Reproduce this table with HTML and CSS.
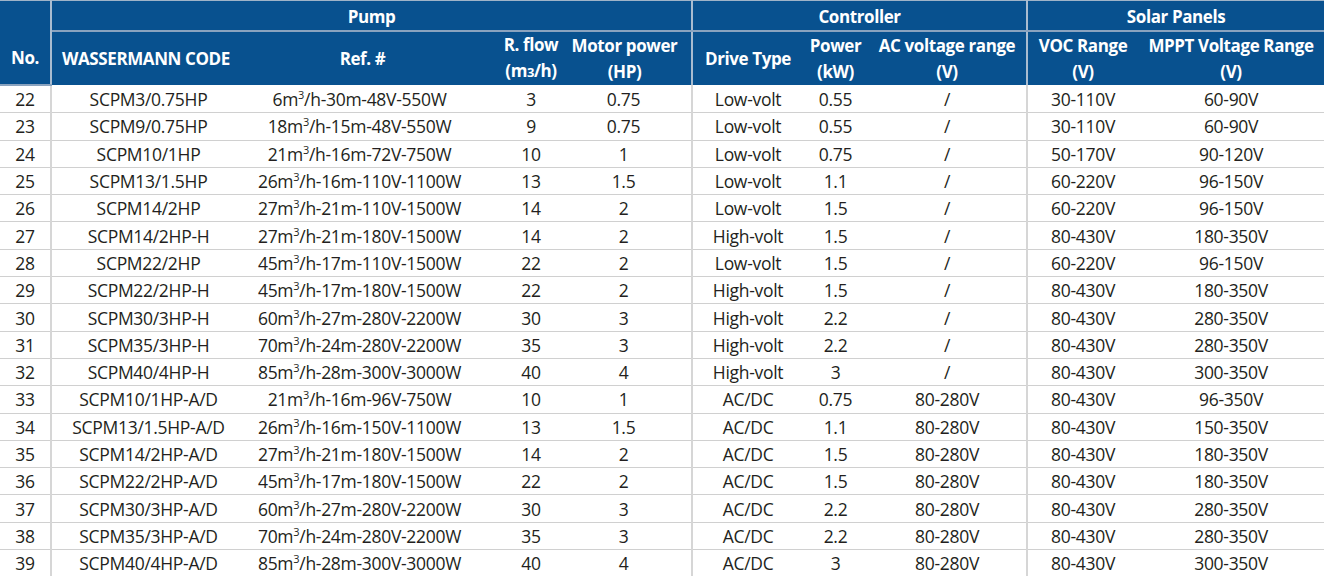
FILE: index.html
```html
<!DOCTYPE html>
<html>
<head>
  <title>Solar Pump Specifications</title>
  <link rel="stylesheet" href="styles.css">
</head>
<body>
  <table class="spec-table">
    <colgroup>
      <col class="c-no">
      <col class="c-code">
      <col class="c-ref">
      <col class="c-flow">
      <col class="c-motor">
      <col class="c-drive">
      <col class="c-power">
      <col class="c-ac">
      <col class="c-voc">
      <col class="c-mppt">
    </colgroup>
    <thead>
      <tr class="group-row">
        <th rowspan="2" class="no-head">No.</th>
        <th colspan="4">Pump</th>
        <th colspan="3" class="group-start">Controller</th>
        <th colspan="2" class="group-start">Solar Panels</th>
      </tr>
      <tr class="sub-row">
        <th class="code-head">WASSERMANN CODE</th>
        <th class="ref-head">Ref. #</th>
        <th>R. flow<br>(m<span class="small3">3</span>/h)</th>
        <th class="motor-head">Motor power<br>(HP)</th>
        <th class="group-start">Drive Type</th>
        <th>Power<br>(kW)</th>
        <th>AC voltage range<br>(V)</th>
        <th class="group-start">VOC Range<br>(V)</th>
        <th>MPPT Voltage Range<br>(V)</th>
      </tr>
    </thead>
    <tbody id="rows"></tbody>
  </table>

  <script>
    const data = [
      [22, 'SCPM3/0.75HP', 6, '30m-48V-550W', 3, '0.75', 'Low-volt', '0.55', '/', '30-110V', '60-90V'],
      [23, 'SCPM9/0.75HP', 18, '15m-48V-550W', 9, '0.75', 'Low-volt', '0.55', '/', '30-110V', '60-90V'],
      [24, 'SCPM10/1HP', 21, '16m-72V-750W', 10, '1', 'Low-volt', '0.75', '/', '50-170V', '90-120V'],
      [25, 'SCPM13/1.5HP', 26, '16m-110V-1100W', 13, '1.5', 'Low-volt', '1.1', '/', '60-220V', '96-150V'],
      [26, 'SCPM14/2HP', 27, '21m-110V-1500W', 14, '2', 'Low-volt', '1.5', '/', '60-220V', '96-150V'],
      [27, 'SCPM14/2HP-H', 27, '21m-180V-1500W', 14, '2', 'High-volt', '1.5', '/', '80-430V', '180-350V'],
      [28, 'SCPM22/2HP', 45, '17m-110V-1500W', 22, '2', 'Low-volt', '1.5', '/', '60-220V', '96-150V'],
      [29, 'SCPM22/2HP-H', 45, '17m-180V-1500W', 22, '2', 'High-volt', '1.5', '/', '80-430V', '180-350V'],
      [30, 'SCPM30/3HP-H', 60, '27m-280V-2200W', 30, '3', 'High-volt', '2.2', '/', '80-430V', '280-350V'],
      [31, 'SCPM35/3HP-H', 70, '24m-280V-2200W', 35, '3', 'High-volt', '2.2', '/', '80-430V', '280-350V'],
      [32, 'SCPM40/4HP-H', 85, '28m-300V-3000W', 40, '4', 'High-volt', '3', '/', '80-430V', '300-350V'],
      [33, 'SCPM10/1HP-A/D', 21, '16m-96V-750W', 10, '1', 'AC/DC', '0.75', '80-280V', '80-430V', '96-350V'],
      [34, 'SCPM13/1.5HP-A/D', 26, '16m-150V-1100W', 13, '1.5', 'AC/DC', '1.1', '80-280V', '80-430V', '150-350V'],
      [35, 'SCPM14/2HP-A/D', 27, '21m-180V-1500W', 14, '2', 'AC/DC', '1.5', '80-280V', '80-430V', '180-350V'],
      [36, 'SCPM22/2HP-A/D', 45, '17m-180V-1500W', 22, '2', 'AC/DC', '1.5', '80-280V', '80-430V', '180-350V'],
      [37, 'SCPM30/3HP-A/D', 60, '27m-280V-2200W', 30, '3', 'AC/DC', '2.2', '80-280V', '80-430V', '280-350V'],
      [38, 'SCPM35/3HP-A/D', 70, '24m-280V-2200W', 35, '3', 'AC/DC', '2.2', '80-280V', '80-430V', '280-350V'],
      [39, 'SCPM40/4HP-A/D', 85, '28m-300V-3000W', 40, '4', 'AC/DC', '3', '80-280V', '80-430V', '300-350V']
    ];

    const tbody = document.getElementById('rows');
    data.forEach(function(r) {
      const tr = document.createElement('tr');
      tr.innerHTML =
        '<td class="no-cell">' + r[0] + '</td>' +
        '<td>' + r[1] + '</td>' +
        '<td class="ref-cell">' + r[2] + 'm<sup>3</sup>/h-' + r[3] + '</td>' +
        '<td>' + r[4] + '</td>' +
        '<td class="motor-cell">' + r[5] + '</td>' +
        '<td class="group-start">' + r[6] + '</td>' +
        '<td>' + r[7] + '</td>' +
        '<td>' + r[8] + '</td>' +
        '<td class="group-start">' + r[9] + '</td>' +
        '<td>' + r[10] + '</td>';
      tbody.appendChild(tr);
    });
  </script>
</body>
</html>
```

FILE: styles.css
```css
body {
  margin: 0;
  padding: 0;
  background-color: #fff;
  font-family: "Open Sans", "Noto Sans", sans-serif;
  color: #231f20;
}

.spec-table {
  width: 1324px;
  border-collapse: collapse;
  table-layout: fixed;
}

.c-no { width: 51px; }
.c-code { width: 194px; }
.c-ref { width: 249px; }
.c-flow { width: 74px; }
.c-motor { width: 124px; }
.c-drive { width: 111px; }
.c-power { width: 65px; }
.c-ac { width: 159px; }
.c-voc { width: 111px; }
.c-mppt { width: 186px; }

thead th {
  background-color: #08518f;
  color: #fff;
  font-weight: 700;
  font-size: 17px;
  letter-spacing: -0.4px;
  padding: 0;
  text-align: center;
  white-space: nowrap;
}

.group-row th {
  height: 26px;
  line-height: 24px;
  padding-top: 3px;
  border-top: 1px solid #9fb3c8;
  border-bottom: 2px solid #8aa3bf;
}

.sub-row th {
  height: 52px;
  line-height: 26px;
}

.no-head {
  border-right: 2px solid #a9bcd0;
  padding-top: 30px !important;
}

.code-head {
  text-align: left !important;
  padding-left: 10px !important;
}

.ref-head {
  padding-right: 14px !important;
}

.motor-head {
  padding-right: 10px !important;
}

thead th.group-start {
  border-left: 2px solid #a9bcd0;
}

.small3 {
  font-size: 13px;
}

tbody td {
  height: 26.3px;
  padding: 0;
  font-size: 17.5px;
  letter-spacing: -0.3px;
  text-align: center;
  white-space: nowrap;
  border-bottom: 1px solid #d0d0d0;
}

tbody td.no-cell {
  border-right: 2px solid #d6d6d6;
}

tbody td.group-start {
  border-left: 2px solid #d6d6d6;
}

.ref-cell {
  padding-right: 20px !important;
}

.motor-cell {
  padding-right: 12px !important;
}

sup {
  font-size: 11px;
  line-height: 0;
  vertical-align: 7px;
}
```
